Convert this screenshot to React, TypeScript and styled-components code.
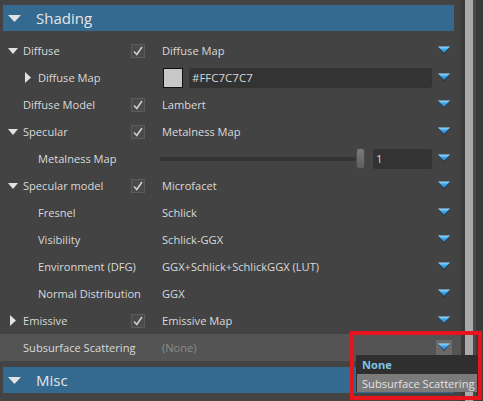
import React from "react";
import styled, { createGlobalStyle } from "styled-components";

const Global = createGlobalStyle`
  html, body { margin: 0; padding: 0; background: #434343; }
  body { font-family: "Open Sans", "Noto Sans", sans-serif; overflow: hidden; }
  * { box-sizing: border-box; }
`;

const Page = styled.div`
  position: relative;
  display: flex;
  width: 483px;
  height: 401px;
  background: #434343;
  overflow: hidden;
`;

const Main = styled.div`
  width: 461px;
  padding-top: 5px;
  display: flex;
  flex-direction: column;
`;

const Header = styled.div<{ $gap?: number }>`
  margin-left: 3px;
  margin-top: ${(p) => p.$gap ?? 0}px;
  width: 451px;
  height: 26px;
  background: #346a8f;
  display: flex;
  align-items: center;
  padding-left: 5px;
  color: #e6e6e6;
  font-size: 15px;
  flex-shrink: 0;
`;

const HeaderTitle = styled.span`
  margin-left: 15px;
  margin-top: -1px;
`;

const Rows = styled.div`
  margin-top: 6px;
  display: flex;
  flex-direction: column;
`;

const Row = styled.div<{ $active?: boolean }>`
  height: 27px;
  display: grid;
  grid-template-columns: 128px 31px 270px 22px;
  align-items: center;
  padding-left: 3px;
  background: ${(p) => (p.$active ? "#545454" : "transparent")};
  font-size: 11.1px;
  color: #dadada;
`;

const LabelCell = styled.div<{ $level: number }>`
  display: flex;
  align-items: center;
  padding-left: ${(p) => 1 + p.$level * 15}px;
  white-space: nowrap;
  overflow: visible;
`;

const ToggleBox = styled.span`
  width: 17px;
  height: 14px;
  margin-right: 2px;
  display: flex;
  align-items: center;
  justify-content: center;
  flex-shrink: 0;
`;

const CheckBox = styled.span`
  width: 14px;
  height: 14px;
  border: 1px solid #5c5c5c;
  background: #4a4a4a;
  display: flex;
  align-items: center;
  justify-content: center;
`;

const ValueCell = styled.div`
  display: flex;
  align-items: center;
  white-space: nowrap;
`;

const ValueText = styled.span<{ $muted?: boolean }>`
  color: ${(p) => (p.$muted ? "#8c8c8c" : "#dadada")};
`;

const Swatch = styled.span<{ $color: string }>`
  width: 20px;
  height: 20px;
  margin-left: 1px;
  border: 1px solid #111;
  background: ${(p) => p.$color};
  flex-shrink: 0;
`;

const Field = styled.span<{ $width?: number }>`
  height: 20px;
  ${(p) => (p.$width ? `width: ${p.$width}px;` : "flex: 1;")}
  margin-left: 6px;
  background: #333333;
  border-radius: 3px;
  display: flex;
  align-items: center;
  padding-left: 3px;
  color: #d6d6d6;
  font-size: 11.5px;
`;

const Slider = styled.div`
  margin-left: -2px;
  display: flex;
  align-items: center;
  flex: 1;
`;

const Track = styled.span`
  flex: 1;
  height: 4px;
  background: #333333;
  border-radius: 2px;
`;

const Thumb = styled.span`
  width: 9px;
  height: 21px;
  border-radius: 3px;
  background: linear-gradient(#7a7a7a, #5e5e5e);
  border: 1px solid #4a4a4a;
  margin-right: 2px;
`;

const ArrowCell = styled.div`
  display: flex;
  align-items: center;
  padding-left: 6px;
`;

const ArrowBox = styled.span<{ $hover?: boolean }>`
  width: 16px;
  height: 16px;
  margin-left: -2px;
  display: flex;
  align-items: center;
  justify-content: center;
  background: ${(p) => (p.$hover ? "#6a6a6a" : "transparent")};
`;

const Scrollbar = styled.div`
  width: 22px;
  height: 401px;
  display: flex;
`;

const Strip = styled.span<{ $w: number; $c: string }>`
  width: ${(p) => p.$w}px;
  height: 100%;
  background: ${(p) => p.$c};
`;

const Popup = styled.div`
  position: absolute;
  left: 356px;
  top: 355px;
  width: 122px;
  height: 37px;
  background: #2f2f2f;
  display: flex;
  flex-direction: column;
  font-size: 11.1px;
`;

const PopupItem = styled.div<{ $selected?: boolean; $hover?: boolean }>`
  height: ${(p) => (p.$hover ? 18 : 19)}px;
  display: flex;
  align-items: center;
  padding-left: ${(p) => (p.$hover ? 5 : 6)}px;
  margin: ${(p) => (p.$hover ? "0 1px" : "0")};
  font-weight: ${(p) => (p.$selected ? 700 : 400)};
  color: ${(p) => (p.$selected ? "#7cc4e8" : "#e2e2e2")};
  background: ${(p) => (p.$hover ? "#7b7b7b" : "transparent")};
  white-space: nowrap;
`;

const Annotation = styled.div`
  position: absolute;
  left: 350px;
  top: 331px;
  width: 132px;
  height: 69px;
  border: 4px solid #e8141c;
  pointer-events: none;
`;

const DownTri = ({ w = 10, h = 6 }: { w?: number; h?: number }) => (
  <svg width={w} height={h} viewBox={`0 0 ${w} ${h}`}>
    <polygon points={`0,0 ${w},0 ${w / 2},${h}`} fill="#e2e2e2" />
  </svg>
);

const RightTri = () => (
  <svg width={6} height={11} viewBox="0 0 6 11">
    <polygon points="0,0 6,5.5 0,11" fill="#e2e2e2" />
  </svg>
);

const Check = () => (
  <svg width={12} height={12} viewBox="0 0 12 12">
    <path d="M2 6.5 L4.8 9.5 L10 2" stroke="#cfcfcf" strokeWidth={1.6} fill="none" />
  </svg>
);

const DropArrow = () => (
  <svg width={12} height={9} viewBox="0 0 12 9">
    <defs>
      <linearGradient id="dg" x1="0" y1="0" x2="0" y2="1">
        <stop offset="0" stopColor="#9fdcff" />
        <stop offset="0.45" stopColor="#3aa6ee" />
        <stop offset="1" stopColor="#1f7cc4" />
      </linearGradient>
    </defs>
    <polygon points="1,2 11,2 6,8.5" fill="#1e2a33" opacity={0.7} />
    <polygon points="0,0.5 12,0.5 6,7" fill="url(#dg)" />
  </svg>
);

type Value =
  | { kind: "text"; text: string; muted?: boolean }
  | { kind: "color"; hex: string; swatch: string }
  | { kind: "slider"; value: string };

type RowData = {
  label: string;
  level: number;
  toggle?: "down" | "right";
  check?: boolean;
  value: Value;
  active?: boolean;
};

const rows: RowData[] = [
  { label: "Diffuse", level: 0, toggle: "down", check: true, value: { kind: "text", text: "Diffuse Map" } },
  { label: "Diffuse Map", level: 1, toggle: "right", value: { kind: "color", hex: "#FFC7C7C7", swatch: "#c7c7c7" } },
  { label: "Diffuse Model", level: 0, check: true, value: { kind: "text", text: "Lambert" } },
  { label: "Specular", level: 0, toggle: "down", check: true, value: { kind: "text", text: "Metalness Map" } },
  { label: "Metalness Map", level: 1, value: { kind: "slider", value: "1" } },
  { label: "Specular model", level: 0, toggle: "down", check: true, value: { kind: "text", text: "Microfacet" } },
  { label: "Fresnel", level: 1, value: { kind: "text", text: "Schlick" } },
  { label: "Visibility", level: 1, value: { kind: "text", text: "Schlick-GGX" } },
  { label: "Environment (DFG)", level: 1, value: { kind: "text", text: "GGX+Schlick+SchlickGGX (LUT)" } },
  { label: "Normal Distribution", level: 1, value: { kind: "text", text: "GGX" } },
  { label: "Emissive", level: 0, toggle: "right", check: true, value: { kind: "text", text: "Emissive Map" } },
  { label: "Subsurface Scattering", level: 0, value: { kind: "text", text: "(None)", muted: true }, active: true },
];

const renderValue = (v: Value) => {
  if (v.kind === "text") return <ValueText $muted={v.muted}>{v.text}</ValueText>;
  if (v.kind === "color")
    return (
      <>
        <Swatch $color={v.swatch} />
        <Field>{v.hex}</Field>
      </>
    );
  return (
    <Slider>
      <Track />
      <Thumb />
      <Field $width={59}>{v.value}</Field>
    </Slider>
  );
};

export default function App() {
  return (
    <Page>
      <Global />
      <Main>
        <Header>
          <DownTri w={13} h={7} />
          <HeaderTitle>Shading</HeaderTitle>
        </Header>
        <Rows>
          {rows.map((r) => (
            <Row key={r.label} $active={r.active}>
              <LabelCell $level={r.level}>
                <ToggleBox>
                  {r.toggle === "down" && <DownTri />}
                  {r.toggle === "right" && <RightTri />}
                </ToggleBox>
                {r.label}
              </LabelCell>
              <div>
                {r.check && (
                  <CheckBox>
                    <Check />
                  </CheckBox>
                )}
              </div>
              <ValueCell>{renderValue(r.value)}</ValueCell>
              <ArrowCell>
                <ArrowBox $hover={r.active}>
                  <DropArrow />
                </ArrowBox>
              </ArrowCell>
            </Row>
          ))}
        </Rows>
        <Header $gap={6}>
          <DownTri w={13} h={7} />
          <HeaderTitle>Misc</HeaderTitle>
        </Header>
      </Main>
      <Scrollbar>
        <Strip $w={4} $c="#3a3a3a" />
        <Strip $w={8} $c="#a9a9a9" />
        <Strip $w={3} $c="#4a4a4a" />
        <Strip $w={7} $c="#3b3b3b" />
      </Scrollbar>
      <Popup>
        <PopupItem $selected>None</PopupItem>
        <PopupItem $hover>Subsurface Scattering</PopupItem>
      </Popup>
      <Annotation />
    </Page>
  );
}
